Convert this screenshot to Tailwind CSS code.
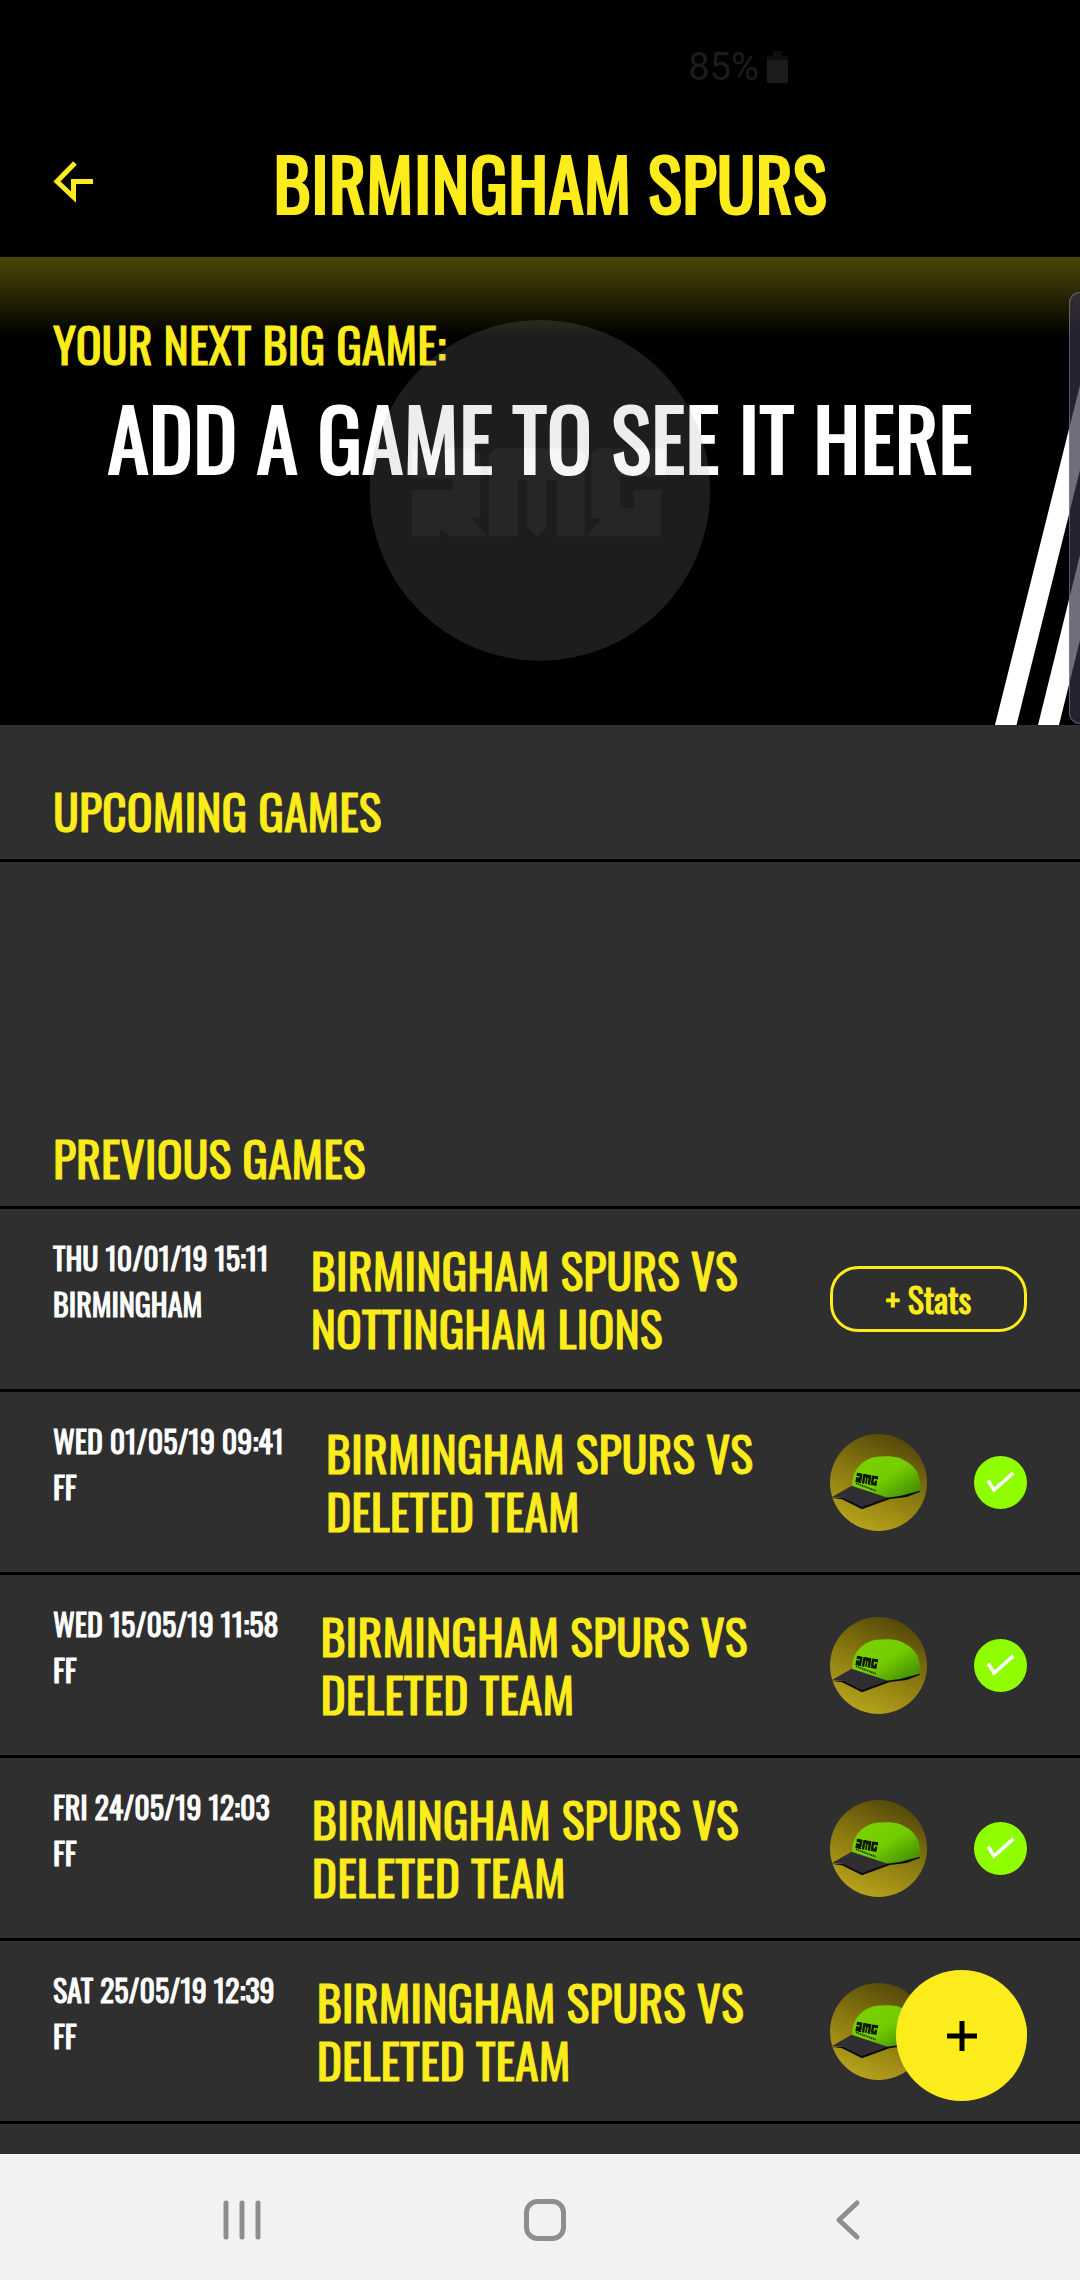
<!DOCTYPE html>
<html lang="en">
<head>
<meta charset="utf-8">
<meta name="viewport" content="width=device-width, initial-scale=1">
<title>Birmingham Spurs</title>
<script src="https://cdn.jsdelivr.net/npm/@tailwindcss/browser@4"></script>
</head>
<body class="flex min-h-screen flex-col bg-[#2f2f2f] font-['Oswald','Open_Sans_Condensed','Roboto_Condensed',sans-serif] text-[#fdec1b] [-webkit-text-stroke:1px]">

<!-- Shared artwork -->
<svg class="absolute size-0" aria-hidden="true">
  <defs>
    <linearGradient id="gold" x1="0.8" y1="0" x2="0.35" y2="1">
      <stop offset="0" stop-color="#4d4208"/><stop offset="0.5" stop-color="#86760f"/><stop offset="1" stop-color="#b7a31b"/>
    </linearGradient>
    <linearGradient id="dome" x1="0.2" y1="0" x2="1" y2="0.8">
      <stop offset="0" stop-color="#7ad200"/><stop offset="0.5" stop-color="#74cc00"/><stop offset="1" stop-color="#459000"/>
    </linearGradient>
    <symbol id="rmg" viewBox="0 0 762 265" preserveAspectRatio="none">
      <path d="M0 0H187L207 20V210H182L227 265H117L87 240V265H0V125H124V90H0Z"/>
      <path d="M232 20L252 0H497L520 20V265H435V95H405V240L377 265L347 235V95H318V265H232Z"/>
      <path d="M540 20L557 0H762V85H625V180H667V125H749V265H522L572 210H540Z"/>
    </symbol>
    <symbol id="cap" viewBox="60 98 291 291">
      <circle cx="205.500" cy="243.500" r="145.500" fill="url(#gold)"/>
      <path d="M127 256C125 214 145 187 178 172C200 163 240 163 262 168C294 180 322 198 329 236V271L270 287L235 291Z" fill="url(#dome)"/>
      <path d="M62 289L96 294L156 324L240 293L290 287L329 272V268L270 284L230 289Z" fill="#0c0b0c"/>
      <path d="M66 287L125 253L233 289L156 317L98 289Z" fill="#302e33"/>
      <g transform="rotate(10 138 216)"><use href="#rmg" x="140" y="213" width="66" height="30" fill="#0c1a02"/></g>
      <path d="M138 246L197 268" stroke="#14300a" stroke-width="5" stroke-dasharray="4 2"/>
    </symbol>
    <symbol id="tick" viewBox="0 0 53 53">
      <circle cx="26.500" cy="26.500" r="26.500" fill="#8fff00"/>
      <path d="M15 26L20 34L38 18" fill="none" stroke="#fff" stroke-width="3.500" stroke-linecap="square"/>
    </symbol>
  </defs>
</svg>

<div class="bg-black">
  <div class="flex h-[107px] items-end justify-center pr-1 pb-[18px] pl-[400px] font-[Roboto,sans-serif] text-[#1c1c1c] [-webkit-text-stroke:0px]">
    <div class="flex items-center gap-2">
      <span class="text-[38px] leading-[44px]">85%</span>
      <svg class="h-8 w-[21px]" viewBox="0 0 21 32" aria-hidden="true"><path d="M6 0H15V5H21V9H0V5H6Z" fill="#0e0e0e"/><path d="M0 9H21V30Q21 32 19 32H2Q0 32 0 30Z" fill="#1c1c1c"/></svg>
    </div>
  </div>
  <header class="flex h-[150px] items-center pr-[73px] pl-[53px]">
    <button type="button" aria-label="Back" class="h-11 w-10">
      <svg class="h-11 w-10" viewBox="0 0 40 44" fill="none" stroke="#fdec1b" stroke-width="5" aria-hidden="true"><path d="M22 3L4 21.500L20.500 37V21.500H40"/></svg>
    </button>
    <h1 class="flex-1 text-center text-[72px] leading-[96px] font-normal [-webkit-text-stroke:2px]">BIRMINGHAM SPURS</h1>
  </header>
</div>

<section class="relative h-[468px] overflow-hidden bg-black pt-[58px]">
  <h2 class="px-[53px] text-[48px] leading-[58px] font-normal">YOUR NEXT BIG GAME:</h2>
  <p class="mt-3 text-center text-[84px] leading-[102px] text-white [-webkit-text-stroke:2px]">ADD A GAME TO SEE IT HERE</p>
  <svg class="absolute top-[63px] left-1/2 size-[341px] -translate-x-1/2 opacity-[0.18]" viewBox="0 0 1023 1023" aria-hidden="true">
    <circle cx="511" cy="511" r="511" fill="#a1a1a1"/>
    <use href="#rmg" x="126" y="385" width="762" height="265" fill="#d0d0d0"/>
  </svg>
  <div class="absolute inset-x-0 top-0 h-20 bg-linear-to-b from-[#fdec1b]/30 to-[#fdec1b]/0"></div>
  <svg class="absolute right-0 bottom-0 h-[340px] w-[85px]" viewBox="0 0 85 340" fill="#fff" aria-hidden="true"><path d="M0 340L85 0V85L21.500 340Z"/><path d="M43 340L85 170V255L64 340Z"/></svg>
  <div class="absolute top-[35px] right-0 h-[432px] w-[11px] rounded-l-xl border border-r-0 border-[#8a8a8a]/60 bg-[#353145]/70"></div>
</section>

<main class="relative flex flex-1 flex-col">
  <section class="h-[347px]">
    <h2 class="border-b-[3px] border-black px-[53px] pt-14 pb-[18px] text-[48px] leading-[60px] font-normal">UPCOMING GAMES</h2>
  </section>
  <section>
    <h2 class="border-b-[3px] border-black px-[53px] pt-14 pb-[18px] text-[48px] leading-[60px] font-normal">PREVIOUS GAMES</h2>
    <ul>
      <li class="flex h-[183px] items-center gap-[42px] border-b-[3px] border-black px-[53px]">
        <p class="self-start pt-[26px] text-[30px] leading-[46px] whitespace-nowrap text-white">THU 10/01/19 15:11<br>BIRMINGHAM</p>
        <h3 class="flex-1 text-[48px] leading-[58px] font-normal whitespace-nowrap">BIRMINGHAM SPURS VS<br>NOTTINGHAM LIONS</h3>
        <button type="button" class="h-[66px] w-[197px] rounded-[28px] border-[3px] border-[#fdec1b] text-[34px] leading-[50px]">+ Stats</button>
      </li>
      <li class="flex h-[183px] items-center gap-[42px] border-b-[3px] border-black px-[53px]">
        <p class="self-start pt-[26px] text-[30px] leading-[46px] whitespace-nowrap text-white">WED 01/05/19 09:41<br>FF</p>
        <h3 class="flex-1 text-[48px] leading-[58px] font-normal whitespace-nowrap">BIRMINGHAM SPURS VS<br>DELETED TEAM</h3>
        <div class="flex w-[197px] items-center justify-between">
          <svg class="size-[97px]" role="img" aria-label="Team cap"><use href="#cap"/></svg>
          <svg class="size-[53px]" role="img" aria-label="Stats added"><use href="#tick"/></svg>
        </div>
      </li>
      <li class="flex h-[183px] items-center gap-[42px] border-b-[3px] border-black px-[53px]">
        <p class="self-start pt-[26px] text-[30px] leading-[46px] whitespace-nowrap text-white">WED 15/05/19 11:58<br>FF</p>
        <h3 class="flex-1 text-[48px] leading-[58px] font-normal whitespace-nowrap">BIRMINGHAM SPURS VS<br>DELETED TEAM</h3>
        <div class="flex w-[197px] items-center justify-between">
          <svg class="size-[97px]" role="img" aria-label="Team cap"><use href="#cap"/></svg>
          <svg class="size-[53px]" role="img" aria-label="Stats added"><use href="#tick"/></svg>
        </div>
      </li>
      <li class="flex h-[183px] items-center gap-[42px] border-b-[3px] border-black px-[53px]">
        <p class="self-start pt-[26px] text-[30px] leading-[46px] whitespace-nowrap text-white">FRI 24/05/19 12:03<br>FF</p>
        <h3 class="flex-1 text-[48px] leading-[58px] font-normal whitespace-nowrap">BIRMINGHAM SPURS VS<br>DELETED TEAM</h3>
        <div class="flex w-[197px] items-center justify-between">
          <svg class="size-[97px]" role="img" aria-label="Team cap"><use href="#cap"/></svg>
          <svg class="size-[53px]" role="img" aria-label="Stats added"><use href="#tick"/></svg>
        </div>
      </li>
      <li class="flex h-[183px] items-center gap-[42px] border-b-[3px] border-black px-[53px]">
        <p class="self-start pt-[26px] text-[30px] leading-[46px] whitespace-nowrap text-white">SAT 25/05/19 12:39<br>FF</p>
        <h3 class="flex-1 text-[48px] leading-[58px] font-normal whitespace-nowrap">BIRMINGHAM SPURS VS<br>DELETED TEAM</h3>
        <div class="flex w-[197px] items-center justify-between">
          <svg class="size-[97px]" role="img" aria-label="Team cap"><use href="#cap"/></svg>
          <svg class="size-[53px]" role="img" aria-label="Stats added"><use href="#tick"/></svg>
        </div>
      </li>
    </ul>
  </section>
  <button type="button" aria-label="Add game" class="absolute right-[53px] bottom-[53px] flex size-[131px] items-center justify-center rounded-full bg-[#fdec1b]">
    <svg class="size-[30px]" viewBox="0 0 30 30" stroke="#000" stroke-width="5" aria-hidden="true"><path d="M15 0V30M0 15H30"/></svg>
  </button>
</main>

<nav class="flex h-[126px] items-center justify-around bg-[#f2f2f2] pt-[6px] pr-[81px] pl-[90px]" aria-label="System">
  <button type="button" aria-label="Recent apps"><svg class="size-[42px]" viewBox="0 0 42 42" fill="none" stroke="#8e8e8e" stroke-width="5" stroke-linecap="round" aria-hidden="true"><path d="M5 4V38M21 4V38M37 4V38"/></svg></button>
  <button type="button" aria-label="Home"><svg class="size-[42px]" viewBox="0 0 42 42" fill="none" stroke="#8e8e8e" stroke-width="5" aria-hidden="true"><rect x="2.500" y="2.500" width="37" height="37" rx="11"/></svg></button>
  <button type="button" aria-label="Back"><svg class="size-[42px]" viewBox="0 0 42 42" fill="none" stroke="#8e8e8e" stroke-width="5" stroke-linecap="round" stroke-linejoin="round" aria-hidden="true"><path d="M30 4L12 21L30 38"/></svg></button>
</nav>
</body>
</html>
